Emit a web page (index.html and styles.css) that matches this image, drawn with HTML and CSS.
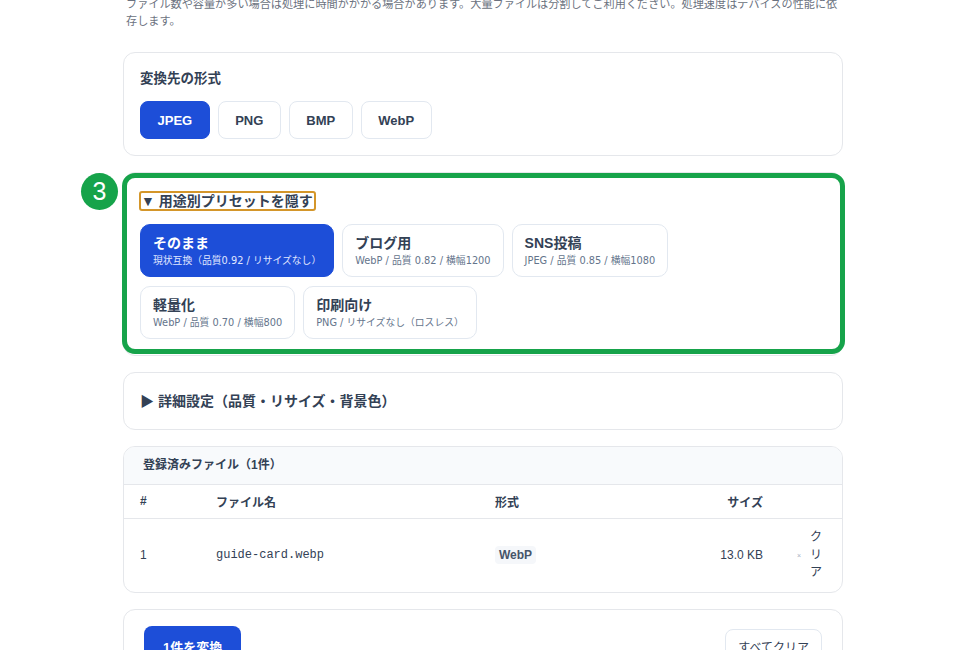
FILE: index.html
```html
<!DOCTYPE html>
<html lang="ja">
<head>
<meta charset="utf-8">
<title>画像一括変換</title>
<link rel="stylesheet" href="styles.css">
</head>
<body>
<main class="page">
  <p class="note">ファイル数や容量が多い場合は処理に時間がかかる場合があります。大量ファイルは分割してご利用ください。処理速度はデバイスの性能に依存します。</p>

  <section class="card format-card">
    <h2 class="card-title">変換先の形式</h2>
    <div class="formats">
      <button class="fmt is-active">JPEG</button>
      <button class="fmt">PNG</button>
      <button class="fmt">BMP</button>
      <button class="fmt">WebP</button>
    </div>
  </section>

  <div class="step">
    <section class="card preset-card">
      <div class="toggle-row"><span class="toggle is-focused">▼ 用途別プリセットを隠す</span></div>
      <div class="presets">
        <button class="preset is-active">
          <span class="preset-name">そのまま</span>
          <span class="preset-desc">現状互換（品質0.92 / リサイズなし）</span>
        </button>
        <button class="preset">
          <span class="preset-name">ブログ用</span>
          <span class="preset-desc">WebP / 品質 0.82 / 横幅1200</span>
        </button>
        <button class="preset">
          <span class="preset-name">SNS投稿</span>
          <span class="preset-desc">JPEG / 品質 0.85 / 横幅1080</span>
        </button>
        <button class="preset">
          <span class="preset-name">軽量化</span>
          <span class="preset-desc">WebP / 品質 0.70 / 横幅800</span>
        </button>
        <button class="preset">
          <span class="preset-name">印刷向け</span>
          <span class="preset-desc">PNG / リサイズなし（ロスレス）</span>
        </button>
      </div>
    </section>
    <span class="step-ring"></span>
    <span class="step-badge">3</span>
  </div>

  <section class="card details-card">
    <span class="toggle">▶ 詳細設定（品質・リサイズ・背景色）</span>
  </section>

  <section class="card files-card">
    <header class="files-head">登録済みファイル（1件）</header>
    <table class="files">
      <colgroup>
        <col class="c-num"><col class="c-name"><col class="c-type"><col class="c-size"><col class="c-act">
      </colgroup>
      <thead>
        <tr><th>#</th><th>ファイル名</th><th>形式</th><th class="right">サイズ</th><th></th></tr>
      </thead>
      <tbody>
        <tr>
          <td>1</td>
          <td class="mono">guide-card.webp</td>
          <td><span class="tag">WebP</span></td>
          <td class="right">13.0 KB</td>
          <td><span class="row-clear"><span class="x">×</span><span class="lbl">クリア</span></span></td>
        </tr>
      </tbody>
    </table>
  </section>

  <section class="card actions-card">
    <button class="primary">1件を変換</button>
    <button class="secondary">すべてクリア</button>
  </section>
</main>
</body>
</html>
```

FILE: styles.css
```css
* { box-sizing: border-box; }

html, body { background: #ffffff; }

body {
  margin: 0;
  padding-left: 1px;
  font-family: "Liberation Sans", "Noto Sans CJK JP", sans-serif;
  color: #334155;
}

.page {
  width: 720px;
  margin: -5px auto 0;
  display: flex;
  flex-direction: column;
  gap: 16px;
}

.note {
  margin: 0 0 7px;
  padding: 0 5px 0 3px;
  font-family: "Noto Sans CJK JP", sans-serif;
  font-size: 11.15px;
  line-height: 17px;
  color: #6b7280;
}

.card {
  border: 1px solid #e5e7eb;
  border-radius: 12px;
  background: #fff;
}

button {
  font-family: inherit;
  cursor: pointer;
}

/* output format */
.format-card { padding: 16px; }

.card-title {
  margin: 0 0 12px;
  font-size: 13.5px;
  line-height: 20px;
  font-weight: 700;
  color: #334155;
}

.formats { display: flex; gap: 8px; }

.fmt {
  height: 38px;
  padding: 0 16.5px;
  border: 1px solid #e2e8f0;
  border-radius: 8px;
  background: #fff;
  color: #334155;
  font-size: 13px;
  font-weight: 700;
}

.fmt.is-active {
  background: #1d4ed8;
  border-color: #1d4ed8;
  color: #fff;
}

/* presets */
.step { position: relative; }

.preset-card { padding: 18px 16px 16px; }

.toggle-row { margin-bottom: 13px; line-height: 0; }

.toggle {
  display: inline-block;
  font-size: 14px;
  font-weight: 700;
  line-height: 16px;
  color: #334155;
}

.toggle.is-focused {
  border: 2px solid #d4962a;
  border-radius: 3px;
  padding: 0 1px 0 0;
  margin-left: -1px;
}

.presets {
  display: flex;
  flex-wrap: wrap;
  gap: 9px 8px;
}

.preset {
  display: flex;
  flex-direction: column;
  align-items: flex-start;
  padding: 8px 12px;
  border: 1px solid #e2e8f0;
  border-radius: 10px;
  background: #fff;
  text-align: left;
  color: #334155;
}

.preset-name {
  font-size: 14px;
  font-weight: 700;
  line-height: 20px;
}

.preset-desc {
  font-family: "DejaVu Sans", "Noto Sans CJK JP", sans-serif;
  font-size: 9.8px;
  line-height: 15px;
  color: #64748b;
  white-space: nowrap;
}

.preset.is-active {
  background: #1d4ed8;
  border-color: #1d4ed8;
  color: #fff;
}

.preset.is-active .preset-desc { color: #e0e7ff; }

/* highlight ring and step number laid over the preset card */
.step-ring {
  position: absolute;
  top: 1px;
  left: -1px;
  right: -2px;
  bottom: 2px;
  border: 5px solid #16a34a;
  border-radius: 13px;
  pointer-events: none;
}

.step-badge {
  position: absolute;
  top: 1px;
  left: -42px;
  width: 37px;
  height: 37px;
  border-radius: 50%;
  background: #16a34a;
  color: #fff;
  font-family: "Liberation Sans", sans-serif;
  font-size: 25px;
  line-height: 37px;
  text-align: center;
}

/* advanced settings */
.details-card { padding: 16px; }

.details-card .toggle { line-height: 24px; }

/* file list */
.files-card { overflow: hidden; }

.files-head {
  height: 38px;
  padding: 0 19px;
  background: #f8fafc;
  border-bottom: 1px solid #e5e7eb;
  font-size: 12px;
  font-weight: 700;
  line-height: 37px;
  color: #334155;
}

.files {
  width: 100%;
  border-collapse: collapse;
  table-layout: fixed;
  font-size: 12px;
  color: #334155;
}

.c-num { width: 76px; }
.c-name { width: 279px; }
.c-type { width: 130px; }
.c-size { width: 170px; }
.c-act { width: 63px; }

.files th {
  height: 33px;
  padding: 0 16px;
  text-align: left;
  font-weight: 700;
  border-bottom: 1px solid #e5e7eb;
}

.files td {
  padding: 10px 16px;
  height: 74px;
  vertical-align: middle;
}

.files .right { text-align: right; }

.mono {
  font-family: "Liberation Mono", monospace;
  font-size: 12px;
}

.tag {
  display: inline-block;
  padding: 2px 4px;
  background: #f5f7fa;
  border-radius: 4px;
  font-weight: 700;
  color: #475569;
}

.row-clear {
  display: flex;
  align-items: center;
  gap: 9px;
  color: #334155;
}

.row-clear .x {
  flex: none;
  margin-left: 2px;
  font-size: 7px;
  color: #a5b0bf;
}

.row-clear .lbl {
  min-width: 0;
  line-height: 17.5px;
}

/* bottom actions */
.actions-card {
  display: flex;
  align-items: center;
  justify-content: space-between;
  padding: 16px 20px;
}

.primary {
  height: 40px;
  padding: 0 19px;
  border: none;
  border-radius: 8px;
  background: #1d4ed8;
  color: #fff;
  font-size: 13px;
  font-weight: 700;
}

.secondary {
  height: 34px;
  padding: 0 12px;
  border: 1px solid #e2e8f0;
  border-radius: 8px;
  background: #fff;
  color: #334155;
  font-size: 12px;
}
```
